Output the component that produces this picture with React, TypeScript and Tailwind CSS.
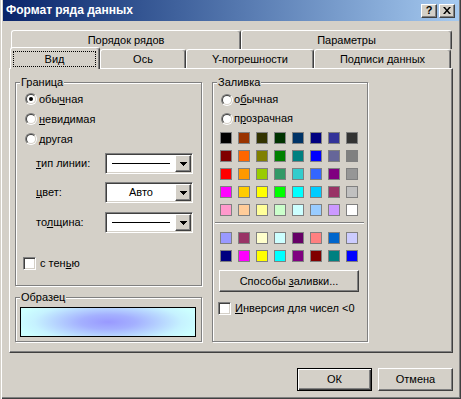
import React from "react";

// classic 3D edges
const raised =
  "border border-t-white border-l-white border-r-[#404040] border-b-[#404040] shadow-[inset_-1px_-1px_0_#808080]";
const sunken =
  "border border-t-[#808080] border-l-[#808080] border-r-white border-b-white shadow-[inset_1px_1px_0_#404040,inset_-1px_-1px_0_#d4d0c8]";
const tabEdge =
  "border-t border-l border-r border-t-white border-l-white border-r-[#404040] shadow-[inset_-1px_0_0_#808080] rounded-t-[3px] bg-[#d4d0c8]";

const palette = [
  ["bg-[#000000]", "bg-[#993300]", "bg-[#333300]", "bg-[#003300]", "bg-[#003366]", "bg-[#000080]", "bg-[#333399]", "bg-[#333333]"],
  ["bg-[#800000]", "bg-[#ff6600]", "bg-[#808000]", "bg-[#008000]", "bg-[#008080]", "bg-[#0000ff]", "bg-[#666699]", "bg-[#808080]"],
  ["bg-[#ff0000]", "bg-[#ff9900]", "bg-[#99cc00]", "bg-[#339966]", "bg-[#33cccc]", "bg-[#3366ff]", "bg-[#800080]", "bg-[#969696]"],
  ["bg-[#ff00ff]", "bg-[#ffcc00]", "bg-[#ffff00]", "bg-[#00ff00]", "bg-[#00ffff]", "bg-[#00ccff]", "bg-[#993366]", "bg-[#c0c0c0]"],
  ["bg-[#ff99cc]", "bg-[#ffcc99]", "bg-[#ffff99]", "bg-[#ccffcc]", "bg-[#ccffff]", "bg-[#99ccff]", "bg-[#cc99ff]", "bg-[#ffffff]"],
];
const chartColors = [
  ["bg-[#9999ff]", "bg-[#993366]", "bg-[#ffffcc]", "bg-[#ccffff]", "bg-[#660066]", "bg-[#ff8080]", "bg-[#0066cc]", "bg-[#ccccff]"],
  ["bg-[#000080]", "bg-[#ff00ff]", "bg-[#ffff00]", "bg-[#00ffff]", "bg-[#800080]", "bg-[#800000]", "bg-[#008080]", "bg-[#0000ff]"],
];

function Radio({ checked = false }: { checked?: boolean }) {
  return (
    <span className="flex h-[12px] w-[12px] shrink-0 items-center justify-center rounded-full border border-t-[#808080] border-l-[#808080] border-r-white border-b-white">
      <span className="flex h-[10px] w-[10px] items-center justify-center rounded-full border border-t-[#404040] border-l-[#404040] border-r-[#d4d0c8] border-b-[#d4d0c8] bg-white">
        {checked && <span className="h-[4px] w-[4px] rounded-full bg-black" />}
      </span>
    </span>
  );
}

function Check() {
  return <span className={`block h-[13px] w-[13px] shrink-0 bg-white ${sunken}`} />;
}

function Arrow() {
  return (
    <svg width="7" height="4" viewBox="0 0 7 4" shapeRendering="crispEdges">
      <rect x="0" y="0" width="7" height="1" fill="#000" />
      <rect x="1" y="1" width="5" height="1" fill="#000" />
      <rect x="2" y="2" width="3" height="1" fill="#000" />
      <rect x="3" y="3" width="1" height="1" fill="#000" />
    </svg>
  );
}

function Combo({ children }: { children: React.ReactNode }) {
  return (
    <div className={`flex h-[21px] w-[88px] bg-white p-px ${sunken}`}>
      <div className="flex flex-1 items-center justify-center">{children}</div>
      <div className={`flex w-[16px] items-center justify-center bg-[#d4d0c8] ${raised}`}>
        <Arrow />
      </div>
    </div>
  );
}

function Group({
  title,
  className,
  children,
}: {
  title: string;
  className: string;
  children?: React.ReactNode;
}) {
  return (
    <div
      className={`relative border border-[#808080] shadow-[1px_1px_0_#fff,inset_1px_1px_0_#fff] ${className}`}
    >
      <span className="absolute -top-[7px] left-[4px] bg-[#d4d0c8] px-px leading-[13px]">
        {title}
      </span>
      {children}
    </div>
  );
}

function Tab({ label, w, active = false }: { label: string; w: string; active?: boolean }) {
  if (active) {
    return (
      <div className={`relative z-10 -mb-px flex h-[22px] ${w} ${tabEdge} pl-[2px] pr-[3px] pt-[3px]`}>
        <div className="flex h-[16px] flex-1 items-center justify-center border border-dotted border-black">
          {label}
        </div>
      </div>
    );
  }
  return (
    <div className={`flex h-[19px] ${w} items-center justify-center ${tabEdge}`}>{label}</div>
  );
}

function Swatches({ rows }: { rows: string[][] }) {
  return (
    <div className="flex flex-col gap-[6px]">
      {rows.map((row, i) => (
        <div key={i} className="flex gap-[6px]">
          {row.map((c, j) => (
            <span key={j} className={`h-[12px] w-[12px] border border-[#808080] ${c}`} />
          ))}
        </div>
      ))}
    </div>
  );
}

export default function App() {
  return (
    <div className="h-[399px] w-[461px] overflow-hidden bg-[#d4d0c8] font-['Liberation_Sans',Arial,sans-serif] text-[11px] leading-[13px] text-black shadow-[inset_1px_0_0_#d4d0c8,inset_2px_0_0_#fff,inset_-1px_-1px_0_#404040,inset_-2px_-2px_0_#808080]">
      {/* Title bar */}
      <div className="ml-[3px] flex h-[21px] w-[456px] items-center justify-between bg-linear-to-r from-[#0a246a] to-[#a6caf0] pl-[3px] pr-[4px]">
        <span className="text-[12px] font-bold text-white">Формат ряда данных</span>
        <div className="flex gap-[2px]">
          <div className={`flex h-[14px] w-[16px] items-center justify-center bg-[#d4d0c8] text-[11px] font-bold leading-none ${raised}`}>
            ?
          </div>
          <div className={`flex h-[14px] w-[16px] items-center justify-center bg-[#d4d0c8] ${raised}`}>
            <svg width="8" height="7" viewBox="0 0 8 7">
              <path d="M0 0h2l2 2.4L6 0h2L5 3.5 8 7H6L4 4.6 2 7H0l3-3.5z" fill="#000" />
            </svg>
          </div>
        </div>
      </div>

      <div className="ml-[9px] mt-[9px] w-[444px]">
        {/* Tabs */}
        <div className="flex h-[19px] pl-[2px]">
          <Tab label="Порядок рядов" w="w-[230px]" />
          <Tab label="Параметры" w="w-[211px]" />
        </div>
        <div className="flex h-[19px] items-end pl-px">
          <Tab label="Вид" w="w-[90px]" active />
          <Tab label="Ось" w="w-[86px]" />
          <Tab label="Y-погрешности" w="w-[128px]" />
          <Tab label="Подписи данных" w="w-[137px]" />
        </div>

        {/* Page */}
        <div className="flex h-[285px] w-[444px] gap-[10px] border border-t-white border-l-white border-r-[#404040] border-b-[#404040] pl-[5px] pt-[13px] shadow-[inset_-1px_-1px_0_#808080]">
          <div className="flex w-[187px] flex-col gap-[11px]">
            <Group title="Граница" className="h-[204px] w-[187px] pl-[9px] pt-[6px]">
              <div className="flex h-[20px] items-center gap-[2px]">
                <Radio checked />
                <span>
                  обы<u>ч</u>ная
                </span>
              </div>
              <div className="flex h-[20px] items-center gap-[2px]">
                <Radio />
                <span>
                  <u>н</u>евидимая
                </span>
              </div>
              <div className="flex h-[20px] items-center gap-[2px]">
                <Radio />
                <span>другая</span>
              </div>
              <div className="ml-[11px] mt-[4px] flex items-center">
                <span className="w-[69px]">
                  <u>т</u>ип линии:
                </span>
                <Combo>
                  <span className="h-px w-[58px] bg-black" />
                </Combo>
              </div>
              <div className="ml-[11px] mt-[8px] flex items-center">
                <span className="w-[69px]">
                  <u>ц</u>вет:
                </span>
                <Combo>
                  <span>Авто</span>
                </Combo>
              </div>
              <div className="ml-[11px] mt-[9px] flex items-center">
                <span className="w-[69px]">
                  то<u>л</u>щина:
                </span>
                <Combo>
                  <span className="h-px w-[58px] bg-black" />
                </Combo>
              </div>
              <div className="-ml-[2px] mt-[24px] flex items-center gap-[4px]">
                <Check />
                <span>
                  с тен<u>ь</u>ю
                </span>
              </div>
            </Group>

            <Group title="Образец" className="h-[45px] w-[187px] pl-[4px] pt-[9px]">
              <div className="h-[30px] w-[176px] border border-black bg-[radial-gradient(ellipse_92px_24px_at_center,#9999ff_0%,#a4b0ff_30%,#c6f2ff_80%,#ccffff_100%)]" />
            </Group>
          </div>

          <Group title="Заливка" className="h-[260px] w-[156px] pl-[7px] pt-[7px]">
            <div className="ml-px flex h-[19px] items-center gap-[1px]">
              <Radio />
              <span>
                о<u>б</u>ычная
              </span>
            </div>
            <div className="ml-px flex h-[19px] items-center gap-[1px]">
              <Radio />
              <span>
                п<u>р</u>озрачная
              </span>
            </div>
            <div className="mt-[4px]">
              <Swatches rows={palette} />
            </div>
            <div className="-ml-[5px] mt-[6px] h-[2px] w-[149px] border-t border-b border-t-[#808080] border-b-white" />
            <div className="mt-[8px]">
              <Swatches rows={chartColors} />
            </div>
            <div className={`-ml-px mt-[8px] flex h-[22px] w-[140px] items-center justify-center ${raised}`}>
              <span>
                Способы <u>з</u>аливки...
              </span>
            </div>
            <div className="-ml-[2px] mt-[10px] flex items-center gap-[4px]">
              <Check />
              <span>
                <u>И</u>нверсия для чисел &lt;0
              </span>
            </div>
          </Group>
        </div>

        {/* Buttons */}
        <div className="mt-[15px] flex w-[444px] justify-end gap-[6px]">
          <div className="flex h-[23px] w-[75px] items-center justify-center border border-black shadow-[inset_1px_1px_0_#fff,inset_-1px_-1px_0_#404040,inset_-2px_-2px_0_#808080]">
            ОК
          </div>
          <div className={`flex h-[23px] w-[75px] items-center justify-center ${raised}`}>Отмена</div>
        </div>
      </div>
    </div>
  );
}
